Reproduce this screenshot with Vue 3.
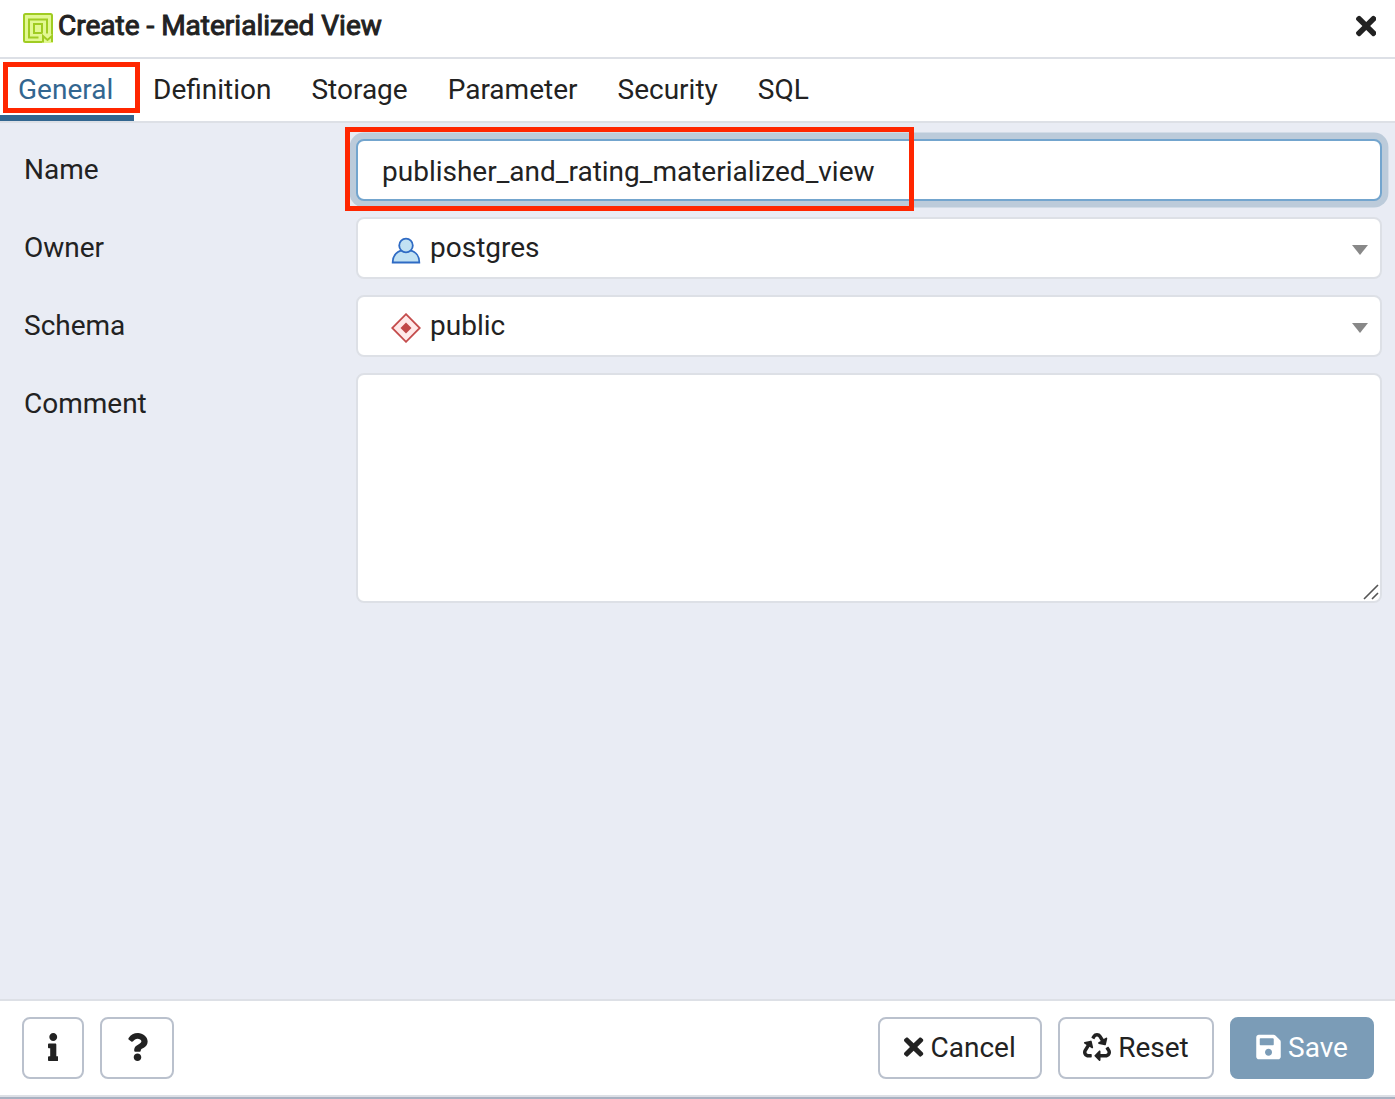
<script setup>
import { ref } from 'vue'

const tabs = ['General', 'Definition', 'Storage', 'Parameter', 'Security', 'SQL']
const active = ref('General')
const name = ref('publisher_and_rating_materialized_view')
const comment = ref('')

const timesPath = 'M242.72 256l100.07-100.07c12.28-12.28 12.28-32.19 0-44.48l-22.24-22.24c-12.28-12.28-32.19-12.28-44.48 0L176 189.28 75.93 89.21c-12.28-12.28-32.19-12.28-44.48 0L9.21 111.45c-12.28 12.28-12.28 32.19 0 44.48L109.28 256 9.21 356.07c-12.28 12.28-12.28 32.19 0 44.48l22.24 22.24c12.28 12.28 32.2 12.28 44.48 0L176 322.72l100.07 100.07c12.28 12.28 32.2 12.28 44.48 0l22.24-22.24c12.28-12.28 12.28-32.19 0-44.48L242.72 256z'
</script>

<template>
  <div class="dialog">
    <header class="header">
      <svg class="view-icon" width="30" height="30" viewBox="0 0 30 30">
        <rect x="1" y="1" width="28" height="28" rx="1.5" fill="#e2f892" stroke="#a0cc22" stroke-width="2" />
        <path d="M15.500 24.500H6V6.500h18v14M19.500 20H11v-9h8v9" fill="none" stroke="#a0cc22" stroke-width="2" />
        <path d="M19 21.500h11V30H19z" fill="#e2f892" />
        <path d="M20 29.500v-6.500l4.500 4 4.500-4v6" fill="none" stroke="#a0cc22" stroke-width="2" />
      </svg>
      <h1 class="title">Create - Materialized View</h1>
      <button class="close" aria-label="Close">
        <svg width="20.500" height="30" viewBox="0 0 352 512"><path :d="timesPath" fill="currentColor" /></svg>
      </button>
    </header>

    <nav class="tabs">
      <button
        v-for="tab in tabs"
        :key="tab"
        class="tab"
        :class="{ active: tab === active }"
        @click="active = tab"
      >{{ tab }}<span v-if="tab === 'General'" class="mark mark-tab"></span></button>
    </nav>

    <main class="body">
      <div class="row">
        <label class="label">Name</label>
        <div class="field">
          <input v-model="name" class="control input focused" type="text" spellcheck="false" />
          <span class="mark mark-name"></span>
        </div>
      </div>
      <div class="row">
        <label class="label">Owner</label>
        <div class="control select">
          <svg width="30" height="30" viewBox="0 0 30 30" fill="#c1e1f3" stroke="#2f6bc4" stroke-width="1.800">
            <path d="M1.700 27.500C1.700 20.300 6 15 15 15S28.300 20.300 28.300 27.500z" />
            <circle cx="15" cy="10.500" r="6.800" />
          </svg>
          <span class="value">postgres</span>
          <span class="caret"></span>
        </div>
      </div>
      <div class="row">
        <label class="label">Schema</label>
        <div class="control select">
          <svg width="30" height="30" viewBox="0 0 30 30">
            <path d="M15 1.200L28.800 15 15 28.800 1.200 15z" fill="#ffe9e9" stroke="#c44c4c" stroke-width="1.800" />
            <path d="M15 9.500L20.500 15 15 20.500 9.500 15z" fill="#c14848" />
          </svg>
          <span class="value">public</span>
          <span class="caret"></span>
        </div>
      </div>
      <div class="row">
        <label class="label">Comment</label>
        <div class="field area-field">
          <textarea v-model="comment" class="control area"></textarea>
          <svg class="grip" width="18" height="18" viewBox="0 0 18 18" fill="none" stroke="#555" stroke-width="1.600">
            <path d="M2 16L16 2M10 16L16 10" />
          </svg>
        </div>
      </div>
    </main>

    <footer class="footer">
      <button class="btn info" aria-label="Info">
        <svg width="10.500" height="28" viewBox="0 0 192 512"><path fill="currentColor" d="M20 424.229h20V279.771H20c-11.046 0-20-8.954-20-20V212c0-11.046 8.954-20 20-20h112c11.046 0 20 8.954 20 20v212.229h20c11.046 0 20 8.954 20 20V492c0 11.046-8.954 20-20 20H20c-11.046 0-20-8.954-20-20v-47.771c0-11.046 8.954-20 20-20zM96 0C56.235 0 24 32.235 24 72s32.235 72 72 72 72-32.235 72-72S135.764 0 96 0z" /></svg>
      </button>
      <button class="btn help" aria-label="Help">
        <svg width="21" height="28" viewBox="0 0 384 512"><path fill="currentColor" d="M202.021 0C122.202 0 70.503 32.703 29.914 91.026c-7.363 10.58-5.093 25.086 5.178 32.874l43.138 32.709c10.373 7.865 25.132 6.026 33.253-4.148 25.049-31.381 43.63-49.449 82.757-49.449 30.764 0 68.816 19.799 68.816 49.631 0 22.552-18.617 34.134-48.993 51.164-35.423 19.86-82.299 44.576-82.299 106.405V320c0 13.255 10.745 24 24 24h72.471c13.255 0 24-10.745 24-24v-5.773c0-42.86 125.268-44.645 125.268-160.627C377.504 66.256 286.902 0 202.021 0zM192 373.459c-38.196 0-69.271 31.075-69.271 69.271 0 38.195 31.075 69.27 69.271 69.27s69.271-31.075 69.271-69.271-31.075-69.27-69.271-69.27z" /></svg>
      </button>
      <span class="spacer"></span>
      <button class="btn cancel">
        <svg width="19.250" height="28" viewBox="0 0 352 512"><path :d="timesPath" fill="currentColor" /></svg>
        <span>Cancel</span>
      </button>
      <button class="btn reset">
        <svg width="28" height="28" viewBox="0 0 512 512"><path fill="currentColor" d="M184.561 261.903c3.232 13.997-12.123 24.635-24.068 17.168l-40.736-25.455-50.867 81.402C55.606 356.273 70.96 384 96.012 384H148c6.627 0 12 5.373 12 12v40c0 6.627-5.373 12-12 12H96.115c-75.334 0-121.302-83.048-81.408-146.88l50.822-81.388-40.725-25.448c-12.081-7.547-8.966-25.961 4.879-29.158l110.237-25.45c8.611-1.988 17.201 3.381 19.189 11.99l25.452 110.237zm98.561-182.915l41.289 66.076-40.74 25.457c-12.051 7.528-9 25.953 4.879 29.158l110.237 25.45c8.672 1.999 17.215-3.438 19.189-11.99l25.45-110.237c3.197-13.844-11.99-24.719-24.068-17.168l-40.687 25.424-41.263-66.082c-37.521-60.033-125.209-60.171-162.816 0l-17.963 28.766c-3.51 5.62-1.8 13.021 3.82 16.533l33.919 21.195c5.62 3.512 13.024 1.803 16.536-3.817l17.961-28.743c12.712-20.341 41.973-19.676 54.257-.022zM497.288 301.12l-27.515-44.065c-3.511-5.623-10.916-7.334-16.538-3.821l-33.861 21.159c-5.62 3.512-7.33 10.915-3.818 16.536l27.564 44.112c13.257 21.211-2.057 48.96-27.136 48.96H320V336.02c0-14.213-17.242-21.383-27.313-11.313l-80 79.981c-6.249 6.248-6.249 16.379 0 22.627l80 79.989C302.689 517.308 320 510.3 320 495.989V448h95.88c75.274 0 121.335-82.997 81.408-146.88z" /></svg>
        <span>Reset</span>
      </button>
      <button class="btn save">
        <svg width="25" height="28" viewBox="0 0 448 512"><path fill="currentColor" d="M433.941 129.941l-83.882-83.882A48 48 0 0 0 316.118 32H48C21.490 32 0 53.490 0 80v352c0 26.510 21.490 48 48 48h352c26.510 0 48-21.490 48-48V163.882a48 48 0 0 0-14.059-33.941zM224 416c-35.346 0-64-28.654-64-64 0-35.346 28.654-64 64-64s64 28.654 64 64c0 35.346-28.654 64-64 64zm96-304.520V212c0 6.627-5.373 12-12 12H76c-6.627 0-12-5.373-12-12V108c0-6.627 5.373-12 12-12h228.520c3.183 0 6.235 1.264 8.485 3.515l3.480 3.480A11.996 11.996 0 0 1 320 111.480z" /></svg>
        <span>Save</span>
      </button>
    </footer>
    <div class="edge"></div>
  </div>
</template>

<style>
body {
  margin: 0;
  overflow: hidden;
}
</style>

<style scoped>
.dialog,
.dialog * {
  box-sizing: border-box;
}

.dialog {
  display: flex;
  flex-direction: column;
  width: 100%;
  height: 1099px;
  background: #fff;
  color: #222;
  font-family: Roboto, "Liberation Sans", sans-serif;
  font-size: 28px;
  line-height: 42px;
}

svg {
  display: block;
  flex: none;
}

button {
  font: inherit;
  color: inherit;
  background: none;
  border: 0;
  margin: 0;
  padding: 0;
}

.header {
  display: flex;
  align-items: flex-start;
  height: 59px;
  padding: 5px 19px 0 23px;
  border-bottom: 2px solid #dde0e6;
}

.view-icon {
  margin-top: 8px;
}

.title {
  flex: 1;
  margin: 0 0 0 5px;
  font-size: 28px;
  font-weight: 400;
  -webkit-text-stroke: 1px #222;
}

.close {
  margin-top: 6px;
}

.tabs {
  display: flex;
  height: 64px;
  border-bottom: 2px solid #dde0e6;
}

.tab {
  position: relative;
  height: 62px;
  padding: 6px 20px 0 20px;
  border-bottom: 6px solid transparent;
}

.tab:first-child {
  padding-left: 18px;
  padding-right: 21px;
  margin-right: -1.2px;
}

.tab.active {
  color: #326690;
  border-bottom-color: #326690;
}

.mark {
  position: absolute;
  border: 5px solid #ff2600;
  pointer-events: none;
}

.mark-tab {
  left: 3px;
  top: 3px;
  width: 137px;
  height: 51px;
  z-index: 1;
}

.mark-name {
  left: -11px;
  top: -12px;
  width: 569px;
  height: 84px;
}

.body {
  display: flex;
  flex-direction: column;
  gap: 16px;
  flex: 1;
  padding: 16px 13px 0 24px;
  background: #e9ecf4;
}

.row {
  display: flex;
  align-items: flex-start;
}

.label {
  width: 332px;
  padding-top: 10px;
}

.field {
  position: relative;
  flex: 1;
  display: flex;
}

.control {
  flex: 1;
  min-width: 0;
  height: 62px;
  border: 2px solid #dde0e6;
  border-radius: 8px;
  background: #fff;
  font: inherit;
  color: inherit;
  outline: none;
}

.input {
  padding: 3px 24px 0;
}

.focused {
  border-color: #73a5ce;
  box-shadow: 0 0 0 6.4px #bccbda;
}

.select {
  display: flex;
  align-items: center;
  padding: 0 12px 0 33px;
}

.select svg {
  margin-top: 4px;
}

.value {
  flex: 1;
  margin-left: 9px;
}

.caret {
  border: 8px solid transparent;
  border-top: 10px solid #888;
  border-bottom: 0;
  margin-top: 3px;
}

.area {
  height: 230px;
  resize: none;
}

.grip {
  position: absolute;
  right: 2px;
  bottom: 2px;
}

.footer {
  display: flex;
  height: 96px;
  padding: 16px 21px 0 22px;
  border-top: 2px solid #dde0e6;
}

.btn {
  display: flex;
  align-items: center;
  justify-content: center;
  height: 62px;
  border: 2px solid #bac1cd;
  border-radius: 8px;
}

.btn svg {
  margin-bottom: 2px;
}

.info {
  width: 62px;
}

.help {
  width: 74px;
  margin-left: 16px;
}

.spacer {
  flex: 1;
}

.cancel {
  width: 164px;
  gap: 7px;
}

.reset {
  width: 156px;
  margin-left: 16px;
  gap: 7px;
}

.save {
  width: 144px;
  margin-left: 16px;
  gap: 7px;
  color: #fff;
  background: #7b9cb7;
  border-color: #7b9cb7;
}

.edge {
  height: 4px;
  border-top: 2px solid #dde0e6;
  background: #a9b1c1;
}
</style>
